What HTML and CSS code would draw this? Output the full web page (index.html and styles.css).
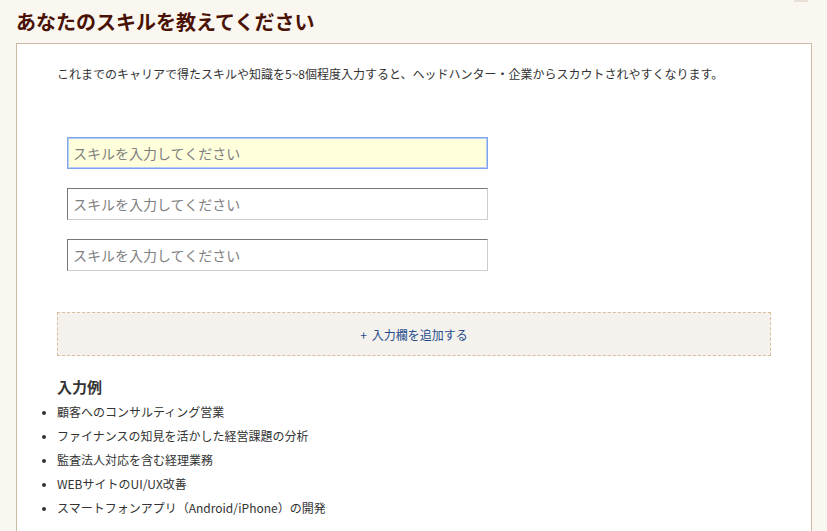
FILE: index.html
```html
<!DOCTYPE html>
<html lang="ja">
<head>
<meta charset="utf-8">
<title>スキル入力</title>
<link rel="stylesheet" href="styles.css">
</head>
<body>
<div class="tab-mark"></div>
<main class="page">
  <h1 class="title">あなたのスキルを教えてください</h1>
  <section class="card">
    <p class="lead">これまでのキャリアで得たスキルや知識を5~8個程度入力すると、ヘッドハンター・企業からスカウトされやすくなります。</p>
    <div class="fields">
      <input class="field field-focus" type="text" placeholder="スキルを入力してください">
      <input class="field" type="text" placeholder="スキルを入力してください">
      <input class="field" type="text" placeholder="スキルを入力してください">
    </div>
    <button class="add-btn" type="button"><span class="plus">+</span>入力欄を追加する</button>
    <h2 class="ex-title">入力例</h2>
    <ul class="ex-list">
      <li>顧客へのコンサルティング営業</li>
      <li>ファイナンスの知見を活かした経営課題の分析</li>
      <li>監査法人対応を含む経理業務</li>
      <li>WEBサイトのUI/UX改善</li>
      <li>スマートフォンアプリ（Android/iPhone）の開発</li>
    </ul>
  </section>
</main>
</body>
</html>
```
FILE: styles.css
```css
html, body {
  margin: 0;
  padding: 0;
  background: #faf7f1;
  height: 100%;
  overflow: hidden;
}
body {
  font-family: "Noto Sans CJK JP", "Noto Sans", sans-serif;
  color: #333;
  position: relative;
}
.tab-mark {
  position: absolute;
  top: 0;
  left: 794px;
  width: 14px;
  height: 2px;
  background: #e9e1d6;
}
.page {
  padding: 0 15px 0 16px;
}
.title {
  margin: 0;
  height: 43px;
  font-size: 20px;
  line-height: 43px;
  font-weight: bold;
  color: #4a1204;
}
.card {
  background: #fff;
  border: 1px solid #cbb9a6;
  padding: 21px 40px 0 40px;
  height: 520px;
}
.lead {
  margin: 0;
  font-size: 12px;
  line-height: 18px;
  color: #333;
}
.fields {
  display: flex;
  flex-direction: column;
  gap: 19px;
  margin: 54px 0 0 10px;
}
.field {
  box-sizing: border-box;
  width: 421px;
  height: 32px;
  margin: 0;
  padding: 0 5px;
  font-family: "Noto Sans CJK JP", sans-serif;
  font-size: 14px;
  color: #333;
  background: #fff;
  border: 1px solid;
  border-color: #777 #ccc #ccc #777;
  outline: none;
}
.field::placeholder {
  color: #808080;
}
.field-focus {
  background: #ffffdc;
  border: 1px solid #7fa6ea;
  box-shadow: 0 0 0 1px #b7cdf3 inset;
}
.add-btn {
  display: block;
  box-sizing: border-box;
  width: 100%;
  height: 44px;
  margin-top: 41px;
  background: #f5f1ec;
  border: 1px dashed #d9bd9f;
  font-family: "Noto Sans CJK JP", sans-serif;
  font-size: 12px;
  color: #1f4d8c;
  cursor: pointer;
  padding: 0;
}
.plus {
  margin-right: 5px;
}
.ex-title {
  margin: 20px 0 0 0;
  font-size: 15px;
  line-height: 22px;
  font-weight: bold;
  color: #333;
}
.ex-list {
  margin: 2px 0 0 0;
  padding: 0;
  list-style: disc outside;
  font-size: 12px;
  line-height: 24px;
  color: #333;
}
.ex-list li::marker {
  font-size: 10px;
}
```
